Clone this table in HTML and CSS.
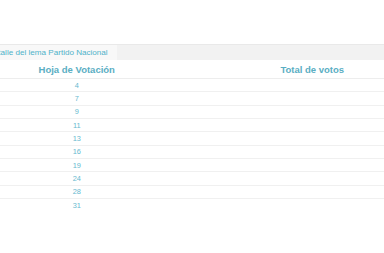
FILE: index.html
```html
<!DOCTYPE html>
<html lang="es">
<head>
<meta charset="utf-8">
<link rel="stylesheet" href="styles.css">
</head>
<body>
<div class="titlebar"><span class="title">Detalle del lema Partido Nacional</span></div>
<table class="results">
  <thead>
    <tr><th>Hoja de Votación</th><th>Total de votos</th></tr>
  </thead>
  <tbody>
    <tr><td>4</td><td></td></tr>
    <tr><td>7</td><td></td></tr>
    <tr><td>9</td><td></td></tr>
    <tr><td>11</td><td></td></tr>
    <tr><td>13</td><td></td></tr>
    <tr><td>16</td><td></td></tr>
    <tr><td>19</td><td></td></tr>
    <tr><td>24</td><td></td></tr>
    <tr><td>28</td><td></td></tr>
    <tr><td>31</td><td></td></tr>
  </tbody>
</table>
</body>
</html>
```
FILE: styles.css
```css
html, body {
  margin: 0;
  padding: 0;
  overflow: hidden;
  background: #ffffff;
  font-family: "Liberation Sans", Arial, sans-serif;
}
body {
  padding-top: 44px;
}
.titlebar {
  display: flex;
  height: 15px;
  margin-left: -19px;
  background: #f2f2f2;
  border-top: 1px solid #e9e9e9;
}
.title {
  display: flex;
  align-items: center;
  padding: 0 9px 0 7px;
  background: #f8f8f8;
  color: #4fb2c9;
  font-size: 8.1px;
}
.results {
  border-collapse: collapse;
  margin-left: -41px;
  width: 471px;
  table-layout: fixed;
}
.results th {
  height: 18px;
  padding: 0;
  font-size: 9.5px;
  font-weight: bold;
  color: #5aaec3;
  text-align: center;
  border-bottom: 1px solid #ededed;
}
.results td {
  height: 13.33px;
  padding: 0;
  font-size: 7.4px;
  color: #67b9cf;
  text-align: center;
  border-top: 1px solid #f0f0f0;
  box-sizing: border-box;
}
.results tbody tr:first-child td {
  border-top: none;
}
```
